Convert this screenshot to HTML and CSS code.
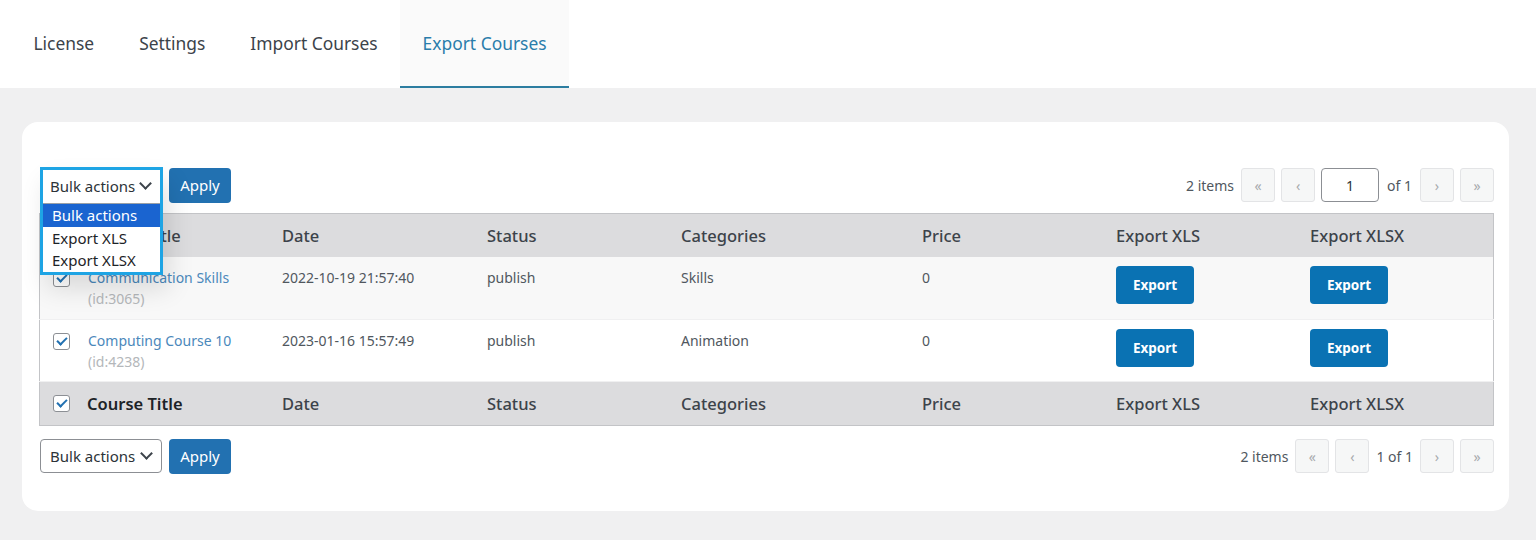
FILE: index.html
```html
<!DOCTYPE html>
<html lang="en">

<head>
  <meta charset="UTF-8">
  <meta name="viewport" content="width=device-width, initial-scale=1.0">
  <title>Export Courses</title>
  <link rel="stylesheet" href="styles.css">
</head>

<body>
  <nav class="tabs">
    <a class="tab" href="#">License</a>
    <a class="tab" href="#">Settings</a>
    <a class="tab" href="#">Import Courses</a>
    <a class="tab active" href="#">Export Courses</a>
  </nav>

  <div class="card">
    <div class="toolbar">
      <div class="bulk-wrap">
        <div class="bulk-open">
          <div class="select">Bulk actions <span class="chevron"></span></div>
          <ul class="options">
            <li class="selected">Bulk actions</li>
            <li>Export XLS</li>
            <li>Export XLSX</li>
          </ul>
        </div>
      </div>
      <button class="apply-button">Apply</button>
      <div class="pagination">
        <span class="count">2 items</span>
        <span class="page-btn">&laquo;</span>
        <span class="page-btn">&lsaquo;</span>
        <input class="page-input" type="text" value="1">
        <span class="of">of 1</span>
        <span class="page-btn">&rsaquo;</span>
        <span class="page-btn">&raquo;</span>
      </div>
    </div>

    <table class="courses">
      <thead>
        <tr>
          <th class="cb-col"><span class="checkbox"></span></th>
          <th class="title-col">Course Title</th>
          <th class="date-col">Date</th>
          <th class="status-col">Status</th>
          <th class="cat-col">Categories</th>
          <th class="price-col">Price</th>
          <th class="xls-col">Export XLS</th>
          <th>Export XLSX</th>
        </tr>
      </thead>
      <tbody>
        <tr class="striped">
          <td class="cb-col"><span class="checkbox"></span></td>
          <td><a class="course-link" href="#">Communication Skills</a><div class="course-id">(id:3065)</div></td>
          <td>2022-10-19 21:57:40</td>
          <td>publish</td>
          <td>Skills</td>
          <td>0</td>
          <td><button class="export-button">Export</button></td>
          <td><button class="export-button">Export</button></td>
        </tr>
        <tr>
          <td class="cb-col"><span class="checkbox"></span></td>
          <td><a class="course-link" href="#">Computing Course 10</a><div class="course-id">(id:4238)</div></td>
          <td>2023-01-16 15:57:49</td>
          <td>publish</td>
          <td>Animation</td>
          <td>0</td>
          <td><button class="export-button">Export</button></td>
          <td><button class="export-button">Export</button></td>
        </tr>
      </tbody>
      <tfoot>
        <tr>
          <th class="cb-col"><span class="checkbox"></span></th>
          <th class="title-col">Course Title</th>
          <th>Date</th>
          <th>Status</th>
          <th>Categories</th>
          <th>Price</th>
          <th>Export XLS</th>
          <th>Export XLSX</th>
        </tr>
      </tfoot>
    </table>

    <div class="toolbar bottom">
      <div class="select">Bulk actions <span class="chevron"></span></div>
      <button class="apply-button">Apply</button>
      <div class="pagination">
        <span class="count">2 items</span>
        <span class="page-btn">&laquo;</span>
        <span class="page-btn">&lsaquo;</span>
        <span class="of wide">1 of 1</span>
        <span class="page-btn">&rsaquo;</span>
        <span class="page-btn">&raquo;</span>
      </div>
    </div>
  </div>
</body>

</html>
```

FILE: styles.css
```css
body {
  font-family: 'Noto Sans', 'Open Sans', sans-serif;
  background-color: #f0f0f1;
  color: #3c434a;
  margin: 0;
}

    .tabs {
      display: flex;
      background-color: #fff;
      height: 88px;
      padding-left: 11px;
    }

    .tab {
      display: block;
      padding: 0 22.5px;
      line-height: 86px;
      font-size: 17.4px;
      color: #3c434a;
      text-decoration: none;
      border-bottom: 2px solid transparent;
    }

    .tab.active {
      background-color: #fafafa;
      color: #2a7dab;
      border-bottom-color: #2c7da0;
    }

    .card {
      background-color: #fff;
      margin: 34px 27px 0 22px;
      border-radius: 16px;
      padding: 45px 15px 38px 17px;
    }

    .toolbar {
      display: flex;
      align-items: center;
      gap: 7px;
      height: 36px;
      margin-bottom: 10px;
    }

    .toolbar.bottom {
      margin: 13px 0 0;
      height: 34px;
    }

    .bulk-wrap {
      position: relative;
      width: 122px;
      height: 36px;
      margin-left: 1px;
    }

    .bulk-open {
      position: absolute;
      top: 0;
      left: 0;
      width: 117px;
      border: 3px solid #1ea4e4;
      background-color: #fff;
      z-index: 2;
      box-shadow: 6px 14px 24px rgba(0, 0, 0, 0.12);
    }

    .bulk-open .select {
      border: none;
      height: 31px;
      width: auto;
      border-radius: 0;
      padding-left: 7px;
    }

    .select {
      display: flex;
      align-items: center;
      justify-content: space-between;
      box-sizing: border-box;
      width: 122px;
      height: 34px;
      padding: 0 10px 0 9px;
      border: 1px solid #8c8f94;
      border-radius: 4px;
      font-size: 15px;
      color: #2c3338;
      background-color: #fff;
    }

    .bottom .select {
      margin-left: 1px;
    }

    .chevron {
      width: 7px;
      height: 7px;
      border-right: 2px solid #3c434a;
      border-bottom: 2px solid #3c434a;
      transform: rotate(45deg);
      margin-top: -5px;
    }

    .options {
      list-style: none;
      margin: 2px 0 0;
      padding: 0;
      border-top: 1px solid #9aa0a6;
      font-size: 15px;
      color: #1d2327;
    }

    .options li {
      height: 22.5px;
      line-height: 22px;
      padding-left: 9px;
    }

    .options li.selected {
      background-color: #1a64d0;
      color: #fff;
    }

    .apply-button {
      background-color: #2271b1;
      border: none;
      color: white;
      font-family: inherit;
      font-size: 15px;
      width: 62px;
      height: 35px;
      border-radius: 4px;
      cursor: pointer;
    }

    .pagination {
      margin-left: auto;
      display: flex;
      align-items: center;
      gap: 6px;
      font-size: 14px;
      color: #50575e;
    }

    .count {
      margin-right: 1px;
    }

    .page-btn {
      display: flex;
      align-items: center;
      justify-content: center;
      box-sizing: border-box;
      width: 34px;
      height: 34px;
      border: 1px solid #e3e4e6;
      border-radius: 3px;
      background-color: #f6f7f7;
      color: #a7aaad;
      font-size: 14px;
    }

    .page-input {
      box-sizing: border-box;
      width: 58px;
      height: 34px;
      border: 1px solid #8c8f94;
      border-radius: 4px;
      text-align: center;
      font-family: inherit;
      font-size: 14px;
      color: #2c3338;
    }

    .of {
      margin: 0 2px;
    }

    .of.wide {
      margin: 0 1px;
    }

    table.courses {
      width: 100%;
      border-collapse: collapse;
      border: 1px solid #c3c4c7;
      table-layout: fixed;
    }

    .courses th {
      background-color: #dcdcde;
      height: 43px;
      padding: 0 8px;
      text-align: left;
      font-weight: 500;
      font-size: 16.5px;
      color: #3c434a;
    }

    .courses th.title-col {
      color: #1d2327;
      font-weight: 600;
      padding-left: 0;
    }

    .courses thead th.title-col {
      font-weight: 500;
      color: #3c434a;
    }

    .courses td {
      vertical-align: top;
      padding: 11px 8px 0;
      height: 48.5px;
      font-size: 14px;
      color: #50575e;
      border-bottom: 1px solid #f0f0f1;
    }

    .courses td:nth-child(2) {
      padding-left: 1px;
    }

    .courses .striped td {
      background-color: #f8f8f8;
    }

    .cb-col {
      width: 34px;
    }

    th.cb-col,
    td.cb-col {
      padding: 0 0 0 13px;
    }

    td.cb-col {
      padding-top: 13px;
    }

    .title-col {
      width: 179px;
    }

    .date-col {
      width: 189px;
    }

    .status-col {
      width: 178px;
    }

    .cat-col {
      width: 225px;
    }

    .price-col {
      width: 178px;
    }

    .xls-col {
      width: 178px;
    }

    .checkbox {
      display: flex;
      align-items: center;
      justify-content: center;
      box-sizing: border-box;
      width: 17px;
      height: 17px;
      border: 1px solid #8c8f94;
      border-radius: 3px;
      background-color: #fff;
    }

    .checkbox::after {
      content: '';
      width: 4px;
      height: 8px;
      border-right: 2px solid #2271b1;
      border-bottom: 2px solid #2271b1;
      transform: rotate(45deg);
      margin-top: -3px;
    }

    .course-link {
      color: #4b88bb;
      text-decoration: none;
    }

    .course-id {
      color: #b4b7ba;
      margin-top: 2px;
    }

    .export-button {
      display: block;
      background-color: #0a72b3;
      border: none;
      color: white;
      font-family: inherit;
      font-weight: 700;
      font-size: 13.5px;
      width: 78px;
      height: 38px;
      border-radius: 4px;
      margin-top: -2px;
      cursor: pointer;
    }
```
